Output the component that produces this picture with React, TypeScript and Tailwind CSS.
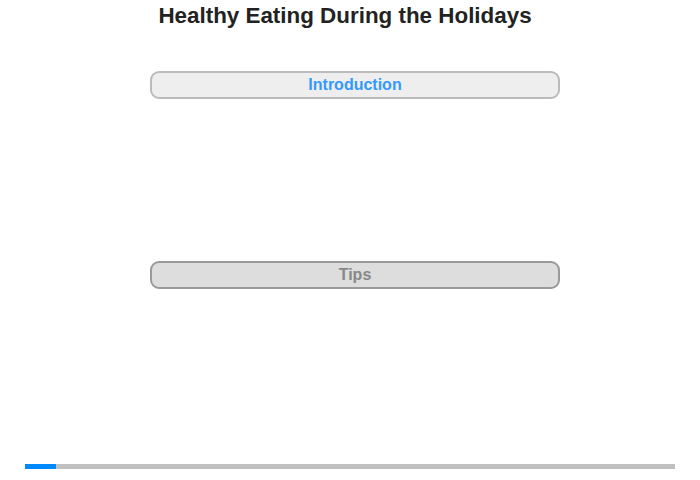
export default function App() {
  return (
    <div className="w-[700px] h-[480px] bg-white flex flex-col" style={{ fontFamily: '"Liberation Sans", Arial, sans-serif' }}>
      <h1 className="mt-[3px] ml-[-10px] text-center text-[22.4px] leading-[26px] font-bold text-[#222]">Healthy Eating During the Holidays</h1>
      <div className="mt-[42px] ml-[150px] w-[410px] h-[28px] rounded-[9px] border-2 border-[#bbbbbb] bg-[#eeeeee] flex items-center justify-center text-[16px] font-bold text-[#3399ff]">Introduction</div>
      <div className="mt-[162px] ml-[150px] w-[410px] h-[28px] rounded-[9px] border-2 border-[#999999] bg-[#dddddd] flex items-center justify-center text-[16px] font-bold text-[#888888]">Tips</div>
      <div className="mt-[175px] ml-[25px] w-[650px] h-[5px] bg-[#c0c0c0] flex">
        <div className="w-[31px] h-full bg-[#0088ff]"></div>
      </div>
    </div>
  );
}
